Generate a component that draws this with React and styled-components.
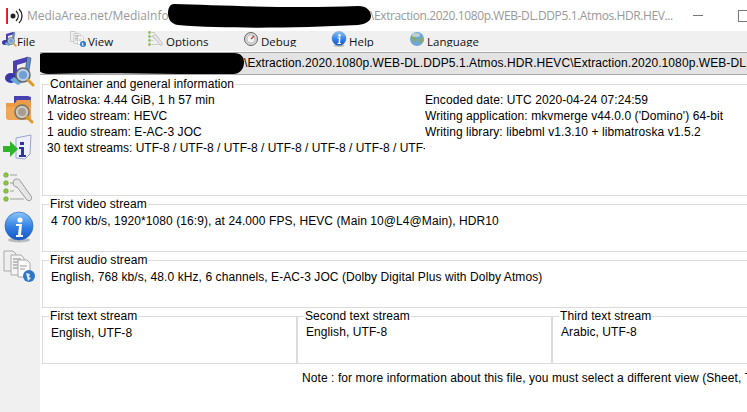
import React from 'react'
import styled, { createGlobalStyle } from 'styled-components'

const Global = createGlobalStyle`
html, body { margin: 0; padding: 0; background: #fff; overflow: hidden; }
`

const Window = styled.div`
width: 747px;
height: 412px;
display: flex;
flex-direction: column;
overflow: hidden;
font-family: "Liberation Sans", Arial, sans-serif;
font-size: 12px;
letter-spacing: .08px;
color: #000;
background: #fff;
`

const TitleBar = styled.div`
position: relative;
flex: 0 0 31px;
display: flex;
align-items: center;
padding-left: 5px;
font-family: "Open Sans", "Noto Sans", sans-serif;
font-size: 12px;
letter-spacing: 0;
color: #999;
white-space: nowrap;
`

const AppName = styled.span`
flex: 0 0 343px;
margin-left: 4px;
letter-spacing: -.06px;
`

const FileName = styled.span`
letter-spacing: -.4px;
`

const WindowButtons = styled.div`
flex: none;
display: flex;
align-items: center;
gap: 35px;
margin: 0 -3px 0 auto;
`

const Minimize = styled.div`
width: 10px;
height: 1px;
background: #777;
`

const Maximize = styled.div`
flex: none;
width: 10px;
height: 10px;
border: 1px solid #777;
`

const Blob = styled.svg`
position: absolute;
left: ${p => p.$left}px;
top: ${p => p.$top}px;
`

const MenuBar = styled.div`
flex: 0 0 20px;
display: flex;
background: #f0f0f0;
overflow: hidden;
`

const MenuItem = styled.div`
width: ${p => p.$w}px;
height: 16px;
display: flex;
align-items: flex-start;
padding-left: 1px;
box-sizing: border-box;
overflow: hidden;
font-family: "Open Sans", "Noto Sans", sans-serif;
font-size: 11.5px;
letter-spacing: 0;
line-height: 18px;
white-space: nowrap;
color: #111;
`

const MenuLabel = styled.span`
margin-top: 2px;
`

const MenuIcon = styled.svg`
flex: none;
width: 16px;
height: 16px;
margin-right: ${p => p.$gap || 0}px;
`

const Body = styled.div`
flex: 1;
display: flex;
min-height: 0;
`

const Sidebar = styled.div`
flex: 0 0 40px;
display: flex;
flex-direction: column;
align-items: flex-start;
gap: 7px;
padding: 4px 0 0 3px;
box-sizing: border-box;
background: #f0f0f0;
`

const SideIcon = styled.svg`
flex: none;
width: 32px;
height: 32px;
`

const Main = styled.div`
flex: 1;
min-width: 0;
display: flex;
flex-direction: column;
overflow: hidden;
`

const PathBar = styled.div`
position: relative;
flex: 0 0 23px;
box-sizing: border-box;
margin: 1px 0 0 -4px;
background: #e3e3e3;
border-top: 1px solid #a8a8a8;
border-bottom: 1px solid #a8a8a8;
line-height: 20px;
white-space: nowrap;
overflow: hidden;
`

const PathText = styled.span`
display: block;
margin-left: 208px;
`

const Groups = styled.div`
display: flex;
flex-direction: column;
gap: 1px;
margin: 2px -40px 0 2px;
`

const Group = styled.fieldset`
box-sizing: border-box;
height: ${p => p.$h}px;
min-width: 0;
margin: 0;
padding: 0;
border: 1px solid #dcdcdc;
overflow: hidden;
`

const Legend = styled.legend`
margin-left: 6px;
padding: 0 1px;
line-height: 14px;
font-size: 12px;
`

const GroupBody = styled.div`
padding: ${p => p.$top || 0}px 0 0 ${p => p.$pad || 8}px;
`

const GroupLine = styled.div`
line-height: 16px;
white-space: nowrap;
letter-spacing: ${p => (p.$tight ? 0 : 'inherit')};
`

const TwoColumns = styled.div`
display: grid;
grid-template-columns: 378px 1fr;
`

const Column = styled.div`
min-width: 0;
overflow: hidden;
`

const TextGroups = styled.div`
display: grid;
grid-template-columns: repeat(3, 255px);
`

const Note = styled.div`
margin: 6px 0 0 262px;
line-height: 16px;
white-space: nowrap;
`

const MusicGlyph = () => (
  <>
    <path d="M10 6l14-4v5l-10 3v13h-4z" fill="#4a3fb5" />
    <ellipse cx="8" cy="23" rx="6" ry="5" fill="#3a35a8" />
    <path d="M24 2l4 1-2 13-4 2z" fill="#5a8fd0" stroke="#334" strokeWidth=".5" />
    <path d="M7 25l8 5 5-3-9-5z" fill="#6aa9d8" />
    <circle cx="20" cy="20" r="7" fill="#b6cfe6" stroke="#666" strokeWidth="1.5" />
    <circle cx="20" cy="20" r="4" fill="#6f9fd4" />
    <path d="M25 25l5 5" stroke="#d89a2a" strokeWidth="3" strokeLinecap="round" />
  </>
)

const FolderGlyph = () => (
  <>
    <path d="M11 2h14l3 1-1 10H11z" fill="#4b40b0" />
    <path d="M3 9h9l2-3h13l1 3v15l-2 2H5l-2-2z" fill="#eb9a45" />
    <path d="M3 13h25v11l-2 2H5l-2-2z" fill="#f0a858" />
    <circle cx="19" cy="18" r="7" fill="#cfc9bd" stroke="#77706a" strokeWidth="1.5" />
    <circle cx="19" cy="18" r="4" fill="#a59c94" />
    <path d="M24 23l5 5" stroke="#d89a2a" strokeWidth="3" strokeLinecap="round" />
  </>
)

const ExportGlyph = () => (
  <>
    <path d="M13 5l15-3-1 19-5 5-9-1z" fill="#eef0fb" stroke="#9fa3d0" />
    <rect x="17" y="9" width="4" height="3" fill="#2b35a8" />
    <path d="M16 14h5v8h2v2h-7v-2h2v-6h-2z" fill="#2b35a8" />
    <path d="M0 13h7V8l8 8-8 8v-5H0z" fill="#2fb52c" />
  </>
)

const WrenchGlyph = () => (
  <>
    <circle cx="3" cy="3" r="2.3" fill="#8fc83c" stroke="#5c9a28" strokeWidth=".6" />
    <circle cx="3" cy="11" r="2.3" fill="#8fc83c" stroke="#5c9a28" strokeWidth=".6" />
    <circle cx="3" cy="19" r="2.3" fill="#8fc83c" stroke="#5c9a28" strokeWidth=".6" />
    <circle cx="3" cy="27" r="2.3" fill="#8fc83c" stroke="#5c9a28" strokeWidth=".6" />
    <path d="M7 3h7M7 11h3M7 19h4M7 27h14" stroke="#c8c8c8" strokeWidth="2" />
    <path d="M11 8c3-2 6-1 7 2l10 14c2 3-1 6-4 4L14 15c-3 0-5-3-3-7z" fill="#e6e6e6" stroke="#999" />
  </>
)

const InfoGlyph = () => (
  <>
    <defs>
      <linearGradient id="infoFill" x1="0" y1="0" x2="0" y2="1">
        <stop offset="0" stopColor="#8cc4f7" />
        <stop offset=".55" stopColor="#2f7fe6" />
        <stop offset="1" stopColor="#1b55c4" />
      </linearGradient>
    </defs>
    <ellipse cx="16" cy="29" rx="11" ry="2.5" fill="#bbb" />
    <circle cx="16" cy="15" r="14" fill="url(#infoFill)" stroke="#1e5fb8" strokeWidth=".6" />
    <circle cx="17" cy="9" r="2.6" fill="#fff" />
    <path d="M13 13h6l-1 11h2v2h-7v-2h2l1-9h-3z" fill="#fff" />
  </>
)

const DocsGlyph = () => (
  <>
    <path d="M1 1h9l3 3v17H1z" fill="#eee" stroke="#aaa" />
    <path d="M8 5h10l3 3v17H8z" fill="#f4f4f4" stroke="#aaa" />
    <path d="M10 9h8M10 12h8M10 15h8M10 18h8" stroke="#888" />
    <path d="M15 10h9l3 3v14H15z" fill="#fbfbfb" stroke="#aaa" />
    <path d="M17 16h7M17 19h5" stroke="#999" />
    <circle cx="26" cy="26" r="6" fill="#2f76c8" />
    <path d="M23 23l4 1-1 3 2 1-3 3-1-4z" fill="#dfeaf5" />
  </>
)

const GearGlyph = () => (
  <>
    <circle cx="16" cy="16" r="13" fill="#d6d6d6" stroke="#666" strokeWidth="2" />
    <circle cx="16" cy="16" r="8" fill="#f4f4f4" stroke="#999" />
    <path d="M16 16l6-6" stroke="#c9352b" strokeWidth="3" />
  </>
)

const GlobeGlyph = () => (
  <>
    <circle cx="16" cy="16" r="14" fill="#6fa6d8" />
    <path d="M8 6l8-2 2 5-5 4 3 5-4 6-5-7-3-2zM21 13l7 1 1 6-5 6-3-5z" fill="#8aa868" />
    <ellipse cx="14" cy="8" rx="8" ry="4" fill="#e3eef8" opacity=".6" />
  </>
)

const menu = [
  { w: 69, label: 'File', Glyph: MusicGlyph },
  { w: 78, label: 'View', Glyph: DocsGlyph, gap: 2 },
  { w: 95, label: 'Options', Glyph: WrenchGlyph, gap: 2 },
  { w: 88, label: 'Debug', Glyph: GearGlyph, gap: 2 },
  { w: 78, label: 'Help', Glyph: InfoGlyph, gap: 2 },
  { w: 120, label: 'Language', Glyph: GlobeGlyph, gap: 2 },
]

const side = [MusicGlyph, FolderGlyph, ExportGlyph, WrenchGlyph, InfoGlyph, DocsGlyph]

const App = () => {
  return (
    <Window>
      <Global />
      <TitleBar>
        <svg width="18" height="18" viewBox="0 0 18 18" style={{ flex: 'none' }}>
          <rect x="1" y="1" width="1" height="16" fill="#e0352b" />
          <rect x="2" y="1" width="1" height="16" fill="#2b52d0" />
          <circle cx="8" cy="9" r="2.5" fill="#222" />
          <path d="M11 4c3 3 3 7 0 10M14 2c4 4 4 10 0 14" fill="none" stroke="#222" strokeWidth="1.3" />
        </svg>
        <AppName>MediaArea.net/MediaInfo</AppName>
        <FileName>\Extraction.2020.1080p.WEB-DL.DDP5.1.Atmos.HDR.HEV...</FileName>
        <WindowButtons>
          <Minimize />
          <Maximize />
        </WindowButtons>
        <Blob $left={168} $top={3} width="204" height="25" viewBox="0 0 204 25">
          <path d="M6 1C50 2 120 6 190 3c9 0 13 5 13 10s-5 8-13 9c-60 3-130 4-180 0C3 21 0 16 0 10 0 5 2 1 6 1z" fill="#000" />
        </Blob>
      </TitleBar>
      <MenuBar>
        {menu.map(({ w, label, Glyph, gap }) => (
          <MenuItem key={label} $w={w}>
            <MenuIcon viewBox="0 0 32 32" $gap={gap}><Glyph /></MenuIcon>
            <MenuLabel>{label}</MenuLabel>
          </MenuItem>
        ))}
      </MenuBar>
      <Body>
        <Sidebar>
          {side.map((Glyph, i) => (
            <SideIcon key={i} viewBox="0 0 32 32"><Glyph /></SideIcon>
          ))}
        </Sidebar>
        <Main>
          <PathBar>
            <PathText>\Extraction.2020.1080p.WEB-DL.DDP5.1.Atmos.HDR.HEVC\Extraction.2020.1080p.WEB-DL.DDP5.1.Atmos.HDR.HEVC</PathText>
            <Blob $left={0} $top={0} width="208" height="22" viewBox="0 0 208 22">
              <path d="M8 0h190c7 0 10 4 10 9s-2 11-10 12c-50 1-120-2-186 0C4 21 0 16 0 10 0 4 3 0 8 0z" fill="#000" />
            </Blob>
          </PathBar>
          <Groups>
            <Group $h={119}>
              <Legend>Container and general information</Legend>
              <GroupBody $pad={4} $top={1}>
                <TwoColumns>
                  <Column>
                    <GroupLine>Matroska: 4.44 GiB, 1 h 57 min</GroupLine>
                    <GroupLine>1 video stream: HEVC</GroupLine>
                    <GroupLine>1 audio stream: E-AC-3 JOC</GroupLine>
                    <GroupLine $tight>30 text streams: UTF-8 / UTF-8 / UTF-8 / UTF-8 / UTF-8 / UTF-8 / UTF-8 / UTF-8</GroupLine>
                  </Column>
                  <Column>
                    <GroupLine>Encoded date: UTC 2020-04-24 07:24:59</GroupLine>
                    <GroupLine>Writing application: mkvmerge v44.0.0 ('Domino') 64-bit</GroupLine>
                    <GroupLine>Writing library: libebml v1.3.10 + libmatroska v1.5.2</GroupLine>
                  </Column>
                </TwoColumns>
              </GroupBody>
            </Group>
            <Group $h={55}>
              <Legend>First video stream</Legend>
              <GroupBody $top={2}>
                <GroupLine>4 700 kb/s, 1920*1080 (16:9), at 24.000 FPS, HEVC (Main 10@L4@Main), HDR10</GroupLine>
              </GroupBody>
            </Group>
            <Group $h={55}>
              <Legend>First audio stream</Legend>
              <GroupBody $top={2}>
                <GroupLine>English, 768 kb/s, 48.0 kHz, 6 channels, E-AC-3 JOC (Dolby Digital Plus with Dolby Atmos)</GroupLine>
              </GroupBody>
            </Group>
            <TextGroups>
              <Group $h={55}>
                <Legend>First text stream</Legend>
                <GroupBody $top={2}>
                  <GroupLine>English, UTF-8</GroupLine>
                </GroupBody>
              </Group>
              <Group $h={55}>
                <Legend>Second text stream</Legend>
                <GroupBody $top={1}>
                  <GroupLine>English, UTF-8</GroupLine>
                </GroupBody>
              </Group>
              <Group $h={55}>
                <Legend>Third text stream</Legend>
                <GroupBody $top={1}>
                  <GroupLine>Arabic, UTF-8</GroupLine>
                </GroupBody>
              </Group>
            </TextGroups>
          </Groups>
          <Note>Note : for more information about this file, you must select a different view (Sheet, Tree, Text...)</Note>
        </Main>
      </Body>
    </Window>
  )
}

export default App
